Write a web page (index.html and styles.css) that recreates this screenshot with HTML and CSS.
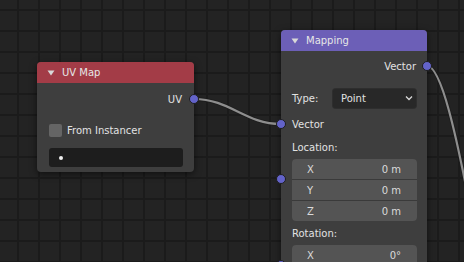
FILE: index.html
```html
<!DOCTYPE html>
<html lang="en">
<head>
  <meta charset="UTF-8" />
  <meta name="viewport" content="width=device-width, initial-scale=1.0" />
  <title>Node Editor - UV Map / Mapping</title>
  <link rel="stylesheet" href="styles.css">
</head>
<body>
  <div class="canvas">
    <svg class="wires" width="464" height="262" viewBox="0 0 464 262">
      <path class="wire-edge" d="M194 99 C230 99 245 124 281 124" />
      <path class="wire" d="M194 99 C230 99 245 124 281 124" />
      <path class="wire-edge" d="M427 66 C440 66 455 120 480 262" />
      <path class="wire" d="M427 66 C440 66 455 120 480 262" />
    </svg>

    <div class="node node-uvmap">
      <div class="node-header header-red">
        <svg class="collapse" width="8" height="6" viewBox="0 0 8 6"><path d="M0.5 0.5 H7.5 L4 5.5 Z" /></svg>
        <span>UV Map</span>
      </div>
      <div class="node-body">
        <div class="row row-out">UV<span class="socket socket-out"></span></div>
        <div class="row check-row">
          <span class="checkbox"></span>
          <span>From Instancer</span>
        </div>
        <div class="text-field"><span class="dot"></span></div>
      </div>
    </div>

    <div class="node node-mapping">
      <div class="node-header header-purple">
        <svg class="collapse" width="8" height="6" viewBox="0 0 8 6"><path d="M0.5 0.5 H7.5 L4 5.5 Z" /></svg>
        <span>Mapping</span>
      </div>
      <div class="node-body">
        <div class="row row-out">Vector<span class="socket socket-out"></span></div>
        <div class="row type-row">
          <span class="type-label">Type:</span>
          <div class="dropdown">
            <span>Point</span>
            <svg width="8" height="6" viewBox="0 0 8 6"><path d="M1 1.5 L4 4.5 L7 1.5" /></svg>
          </div>
        </div>
        <div class="row row-in">Vector<span class="socket socket-in"></span></div>
        <div class="row label-row">Location:</div>
        <div class="field-group">
          <span class="socket socket-group"></span>
          <div class="field"><span>X</span><span>0 m</span></div>
          <div class="field"><span>Y</span><span>0 m</span></div>
          <div class="field"><span>Z</span><span>0 m</span></div>
        </div>
        <div class="row label-row">Rotation:</div>
        <div class="field-group open-bottom">
          <span class="socket socket-group"></span>
          <div class="field"><span>X</span><span>0°</span></div>
        </div>
      </div>
    </div>
  </div>
</body>
</html>
```

FILE: styles.css
```css
body {
  margin: 0;
  background: #232323;
  font-family: "DejaVu Sans", sans-serif;
  font-size: 10px;
  color: #e2e2e2;
}
.canvas {
  position: relative;
  width: 464px;
  height: 262px;
  overflow: hidden;
  background-color: #232323;
  background-image:
    linear-gradient(to right, #1b1b1b 2px, transparent 2px),
    linear-gradient(to bottom, #1b1b1b 2px, transparent 2px);
  background-size: 21px 21px;
  background-position: 17px 9px;
}
.wires {
  position: absolute;
  left: 0;
  top: 0;
}
.wire-edge {
  fill: none;
  stroke: #1a1a1a;
  stroke-width: 4;
  stroke-opacity: 0.6;
}
.wire {
  fill: none;
  stroke: #8e8e8e;
  stroke-width: 2.2;
}
.node {
  position: absolute;
  background: #3e3e3e;
  border-radius: 4px;
  box-shadow: 0 2px 7px rgba(0, 0, 0, 0.55);
}
.node-uvmap {
  left: 37px;
  top: 62px;
  width: 157px;
}
.node-mapping {
  left: 281px;
  top: 30px;
  width: 146px;
  height: 260px;
}
.node-header {
  display: flex;
  align-items: center;
  height: 21px;
  padding-left: 10px;
  border-radius: 4px 4px 0 0;
  color: #e6e6e6;
}
.header-red {
  background: #a33c47;
}
.header-purple {
  background: #6c5fb7;
}
.collapse {
  margin-right: 7px;
}
.collapse path {
  fill: #d8d8d8;
}
.node-body {
  padding: 6px 0 5px;
}
.node-mapping .node-body {
  padding-top: 5px;
}
.row {
  position: relative;
  display: flex;
  align-items: center;
  height: 20px;
  padding: 0 11px;
}
.row-out {
  justify-content: flex-end;
}
.node-uvmap .row-out {
  padding-right: 12px;
}
.socket {
  position: absolute;
  width: 8px;
  height: 8px;
  border-radius: 50%;
  background: #6363c9;
  border: 1px solid #1e1e1e;
}
.socket-out {
  right: -5px;
  top: 5px;
}
.socket-in {
  left: -5px;
  top: 5px;
}
.check-row {
  margin-top: 11px;
  padding-left: 12px;
}
.checkbox {
  width: 13px;
  height: 13px;
  background: #656565;
  border-radius: 2px;
  margin-right: 5px;
}
.text-field {
  display: flex;
  align-items: center;
  height: 19px;
  margin: 8px 11px 0 12px;
  background: #1d1d1d;
  border-radius: 3px;
}
.dot {
  width: 4px;
  height: 4px;
  margin-left: 10px;
  border-radius: 50%;
  background: #f0f0f0;
}
.type-row {
  margin-top: 12px;
}
.type-label {
  width: 41px;
}
.dropdown {
  flex: 1;
  display: flex;
  align-items: center;
  justify-content: space-between;
  height: 19px;
  padding: 0 3px 0 8px;
  background: #282828;
  border-radius: 3px;
  box-shadow: 0 0 0 1px #2e2e2e;
}
.dropdown path {
  fill: none;
  stroke: #d8d8d8;
  stroke-width: 1.3;
}
.row-in {
  margin-top: 6px;
}
.label-row {
  margin-top: 3px;
}
.label-row + .field-group {
  margin-top: 2px;
}
.field-group + .label-row {
  margin-top: 2px;
}
.field-group {
  position: relative;
  display: flex;
  flex-direction: column;
  gap: 1px;
  margin: 0 10px 0 11px;
  background: #3a3a3a;
  border-radius: 4px;
}
.socket-group {
  left: -16px;
  top: 15px;
}
.field {
  display: flex;
  align-items: center;
  justify-content: space-between;
  height: 20px;
  padding: 0 16px 0 15px;
  background: #545454;
  color: #dadada;
}
.field:first-of-type {
  border-radius: 4px 4px 0 0;
}
.field:last-of-type {
  border-radius: 0 0 4px 4px;
}
.open-bottom .field {
  border-radius: 4px 4px 0 0;
}
```
